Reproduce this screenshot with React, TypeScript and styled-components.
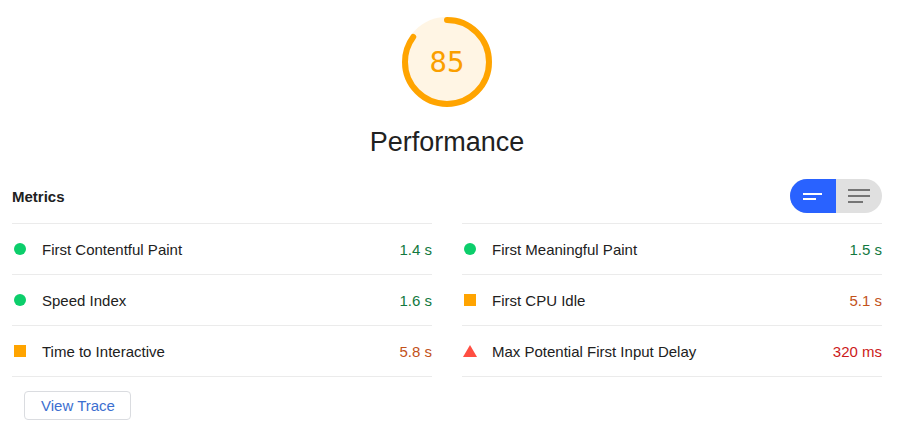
import type { FC } from 'react';
import styled, { createGlobalStyle } from 'styled-components';

type Rating = 'pass' | 'average' | 'fail';

interface Metric {
  label: string;
  value: string;
  rating: Rating;
}

const COLORS: Record<Rating, { icon: string; text: string }> = {
  pass: { icon: '#0cce6b', text: '#12793f' },
  average: { icon: '#ffa400', text: '#c2521a' },
  fail: { icon: '#ff4e42', text: '#cc1a1a' },
};

const LEFT: Metric[] = [
  { label: 'First Contentful Paint', value: '1.4 s', rating: 'pass' },
  { label: 'Speed Index', value: '1.6 s', rating: 'pass' },
  { label: 'Time to Interactive', value: '5.8 s', rating: 'average' },
];

const RIGHT: Metric[] = [
  { label: 'First Meaningful Paint', value: '1.5 s', rating: 'pass' },
  { label: 'First CPU Idle', value: '5.1 s', rating: 'average' },
  { label: 'Max Potential First Input Delay', value: '320 ms', rating: 'fail' },
];

const GlobalStyle = createGlobalStyle`
  html, body {
    margin: 0;
    background: #fff;
    font-family: "Liberation Sans", Arial, sans-serif;
    color: #212121;
  }
`;

const Page = styled.div`
  padding: 17px 17px 0 12px;
`;

const GaugeSection = styled.div`
  display: flex;
  flex-direction: column;
  align-items: center;
`;

const GaugeWrap = styled.div`
  position: relative;
  width: 90px;
  height: 90px;
`;

const Percentage = styled.div`
  position: absolute;
  inset: 0;
  display: flex;
  align-items: center;
  justify-content: center;
  font-family: "DejaVu Sans Mono", Consolas, monospace;
  font-size: 29px;
  color: #fa9f00;
`;

const GaugeLabel = styled.div`
  margin-top: 19px;
  font-size: 27px;
  line-height: 32px;
  color: #212121;
`;

const Header = styled.div`
  display: flex;
  justify-content: space-between;
  align-items: center;
  height: 34px;
  margin-top: 21px;
  margin-bottom: 10px;
`;

const Title = styled.h2`
  margin: 0;
  font-size: 15px;
  font-weight: bold;
  color: #212121;
`;

const Toggle = styled.div`
  display: flex;
  width: 92px;
  height: 34px;
  border-radius: 17px;
  overflow: hidden;
  background: #e0e0e0;
`;

const ToggleHalf = styled.button<{ $active?: boolean }>`
  flex: 1;
  border: 0;
  padding: 0;
  display: flex;
  align-items: center;
  justify-content: center;
  background: ${({ $active }) => ($active ? '#2962ff' : 'transparent')};
  cursor: pointer;
`;

const Grid = styled.div`
  display: grid;
  grid-template-columns: 1fr 1fr;
  column-gap: 30px;
`;

const Column = styled.div`
  border-bottom: 1px solid #ebebeb;
`;

const Row = styled.div`
  display: flex;
  align-items: center;
  height: 51px;
  box-sizing: border-box;
  border-top: 1px solid #ebebeb;
  font-size: 15px;
`;

const IconBox = styled.span`
  width: 14px;
  height: 14px;
  margin-left: 1px;
  margin-right: 15px;
  display: flex;
  align-items: center;
  justify-content: center;
  flex: none;
`;

const Label = styled.span`
  flex: 1;
  color: #212121;
`;

const Value = styled.span<{ $rating: Rating }>`
  color: ${({ $rating }) => COLORS[$rating].text};
`;

const TraceButton = styled.button`
  margin: 14px 0 0 12px;
  height: 29px;
  padding: 0 15px 0 16px;
  border: 1px solid #dadce0;
  border-radius: 4px;
  background: #fff;
  font-family: "Liberation Sans", Arial, sans-serif;
  font-size: 15px;
  color: #3c6fd0;
  cursor: pointer;
`;

const Gauge: FC<{ score: number }> = ({ score }) => {
  const r = 56;
  const c = 2 * Math.PI * r;
  return (
    <GaugeWrap>
      <svg width="90" height="90" viewBox="0 0 120 120">
        <circle cx="60" cy="60" r={r} fill="#ffa400" stroke="#ffa400" strokeWidth="8" opacity="0.1" />
        <circle
          cx="60"
          cy="60"
          r={r}
          fill="none"
          stroke="#ffa400"
          strokeWidth="8"
          strokeLinecap="round"
          strokeDasharray={`${(score / 100) * c} ${c}`}
          transform="rotate(-90 60 60)"
        />
      </svg>
      <Percentage>{score}</Percentage>
    </GaugeWrap>
  );
};

const RatingIcon: FC<{ rating: Rating }> = ({ rating }) => {
  const fill = COLORS[rating].icon;
  return (
    <IconBox>
      <svg width="14" height="14" viewBox="0 0 14 14">
        {rating === 'pass' && <circle cx="7" cy="7" r="6" fill={fill} />}
        {rating === 'average' && <rect x="1" y="1" width="12" height="12" fill={fill} />}
        {rating === 'fail' && <polygon points="7,1 14,13 0,13" fill={fill} />}
      </svg>
    </IconBox>
  );
};

const MetricColumn: FC<{ metrics: Metric[] }> = ({ metrics }) => (
  <Column>
    {metrics.map((m) => (
      <Row key={m.label}>
        <RatingIcon rating={m.rating} />
        <Label>{m.label}</Label>
        <Value $rating={m.rating}>{m.value}</Value>
      </Row>
    ))}
  </Column>
);

const App: FC = () => (
  <Page>
    <GlobalStyle />
    <GaugeSection>
      <Gauge score={85} />
      <GaugeLabel>Performance</GaugeLabel>
    </GaugeSection>
    <Header>
      <Title>Metrics</Title>
      <Toggle>
        <ToggleHalf $active aria-label="compact view">
          <svg width="24" height="24" viewBox="0 0 24 24">
            <rect x="2" y="9" width="19" height="2" fill="#fff" />
            <rect x="2" y="14" width="13" height="2" fill="#fff" />
          </svg>
        </ToggleHalf>
        <ToggleHalf aria-label="expanded view">
          <svg width="24" height="24" viewBox="0 0 24 24">
            <rect x="1" y="5" width="22" height="2" fill="#757575" />
            <rect x="1" y="11" width="22" height="2" fill="#757575" />
            <rect x="1" y="17" width="15" height="2" fill="#757575" />
          </svg>
        </ToggleHalf>
      </Toggle>
    </Header>
    <Grid>
      <MetricColumn metrics={LEFT} />
      <MetricColumn metrics={RIGHT} />
    </Grid>
    <TraceButton>View Trace</TraceButton>
  </Page>
);

export default App;
